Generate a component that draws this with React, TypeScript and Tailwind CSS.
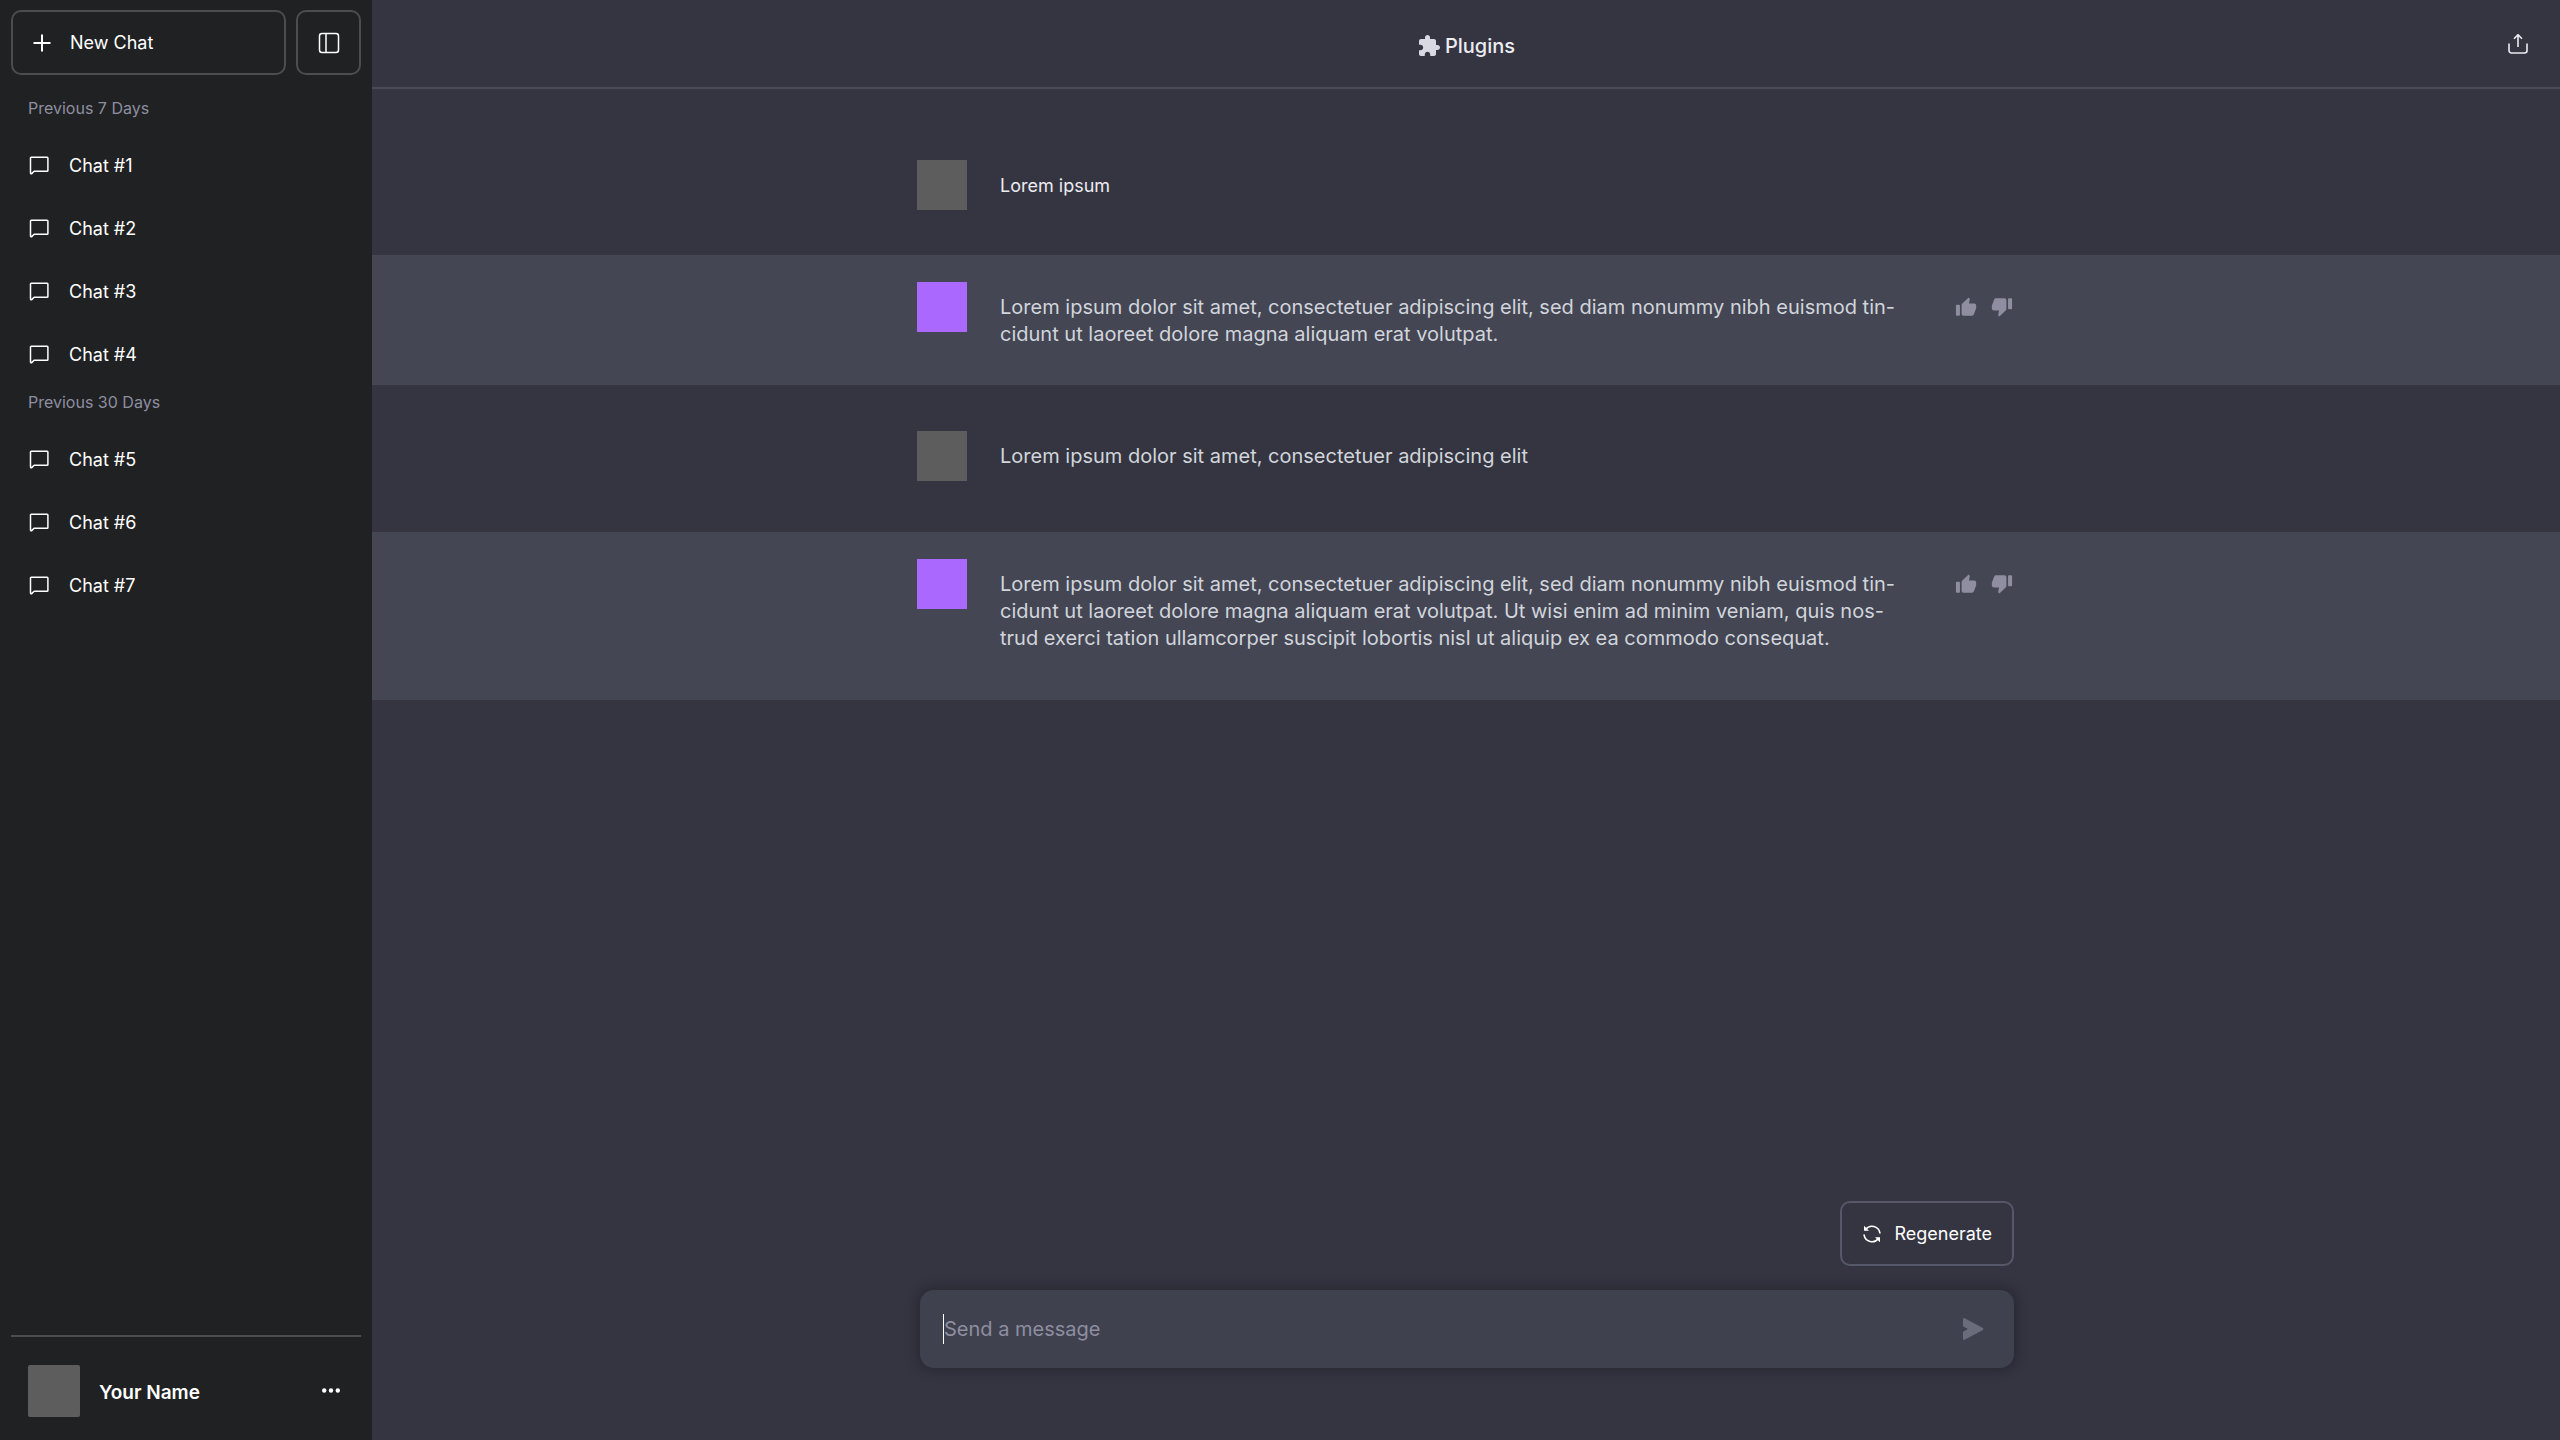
import type { ReactNode } from "react";

function PlusIcon() {
  return (
    <svg className="size-[18px]" viewBox="0 0 18 18" fill="none" stroke="currentColor" strokeWidth="2" aria-hidden="true">
      <path d="M9 .5v17M.5 9h17" />
    </svg>
  );
}

function PanelIcon() {
  return (
    <svg className="size-[22px]" viewBox="0 0 22 22" fill="none" stroke="currentColor" strokeWidth="1.5" aria-hidden="true">
      <rect x="1.5" y="1.5" width="19" height="19" rx="2.5" />
      <path d="M8 1.5v19" />
    </svg>
  );
}

function ChatIcon() {
  return (
    <svg className="size-5 shrink-0" viewBox="0 0 20 20" fill="none" stroke="currentColor" strokeWidth="1.5" strokeLinejoin="round" aria-hidden="true">
      <path d="M2.200 1.300h15.900a.8.8 0 0 1 .8.8v12.400a.8.8 0 0 1-.8.8H5.100l-2.400 2.300c-.5.500-1.200.1-1.200-.5V2c0-.4.300-.7.700-.7z" />
    </svg>
  );
}

function DotsIcon() {
  return (
    <svg className="h-5 w-[18px]" viewBox="0 0 18 20" fill="currentColor" aria-hidden="true">
      <circle cx="2.2" cy="9.5" r="2.2" />
      <circle cx="9" cy="9.5" r="2.2" />
      <circle cx="15.8" cy="9.5" r="2.2" />
    </svg>
  );
}

function PuzzleIcon() {
  return (
    <svg className="size-6" viewBox="0 0 24 24" fill="currentColor" aria-hidden="true">
      <path d="M20.5 11H19V7c0-1.1-.9-2-2-2h-4V3.5C13 2.12 11.88 1 10.5 1S8 2.12 8 3.5V5H4c-1.1 0-1.99.9-1.99 2v3.8H3.5c1.49 0 2.7 1.21 2.7 2.7s-1.21 2.7-2.7 2.7H2V20c0 1.1.9 2 2 2h3.8v-1.5c0-1.49 1.21-2.7 2.7-2.7s2.7 1.21 2.7 2.7V22H17c1.1 0 2-.9 2-2v-4h1.5c1.38 0 2.5-1.12 2.5-2.5S21.88 11 20.5 11z" />
    </svg>
  );
}

function ExportIcon() {
  return (
    <svg className="size-5" viewBox="0 0 20 20" fill="none" stroke="currentColor" strokeWidth="1.6" aria-hidden="true">
      <path d="M1 9.5v7A2.5 2.5 0 0 0 3.5 19h13a2.5 2.5 0 0 0 2.500-2.500v-7" />
      <path d="M10 13V1M6 4.700l4-4 4 4" />
    </svg>
  );
}

function ThumbIcon({ down = false }: { down?: boolean }) {
  return (
    <svg className={down ? "size-[22px] rotate-180" : "size-[22px]"} viewBox="0 0 24 24" fill="currentColor" aria-hidden="true">
      <rect x="1" y="9.6" width="4.4" height="11.9" rx="1" />
      <path d="M14.6 1.9 8 8.3c-.5.5-.8 1.1-.8 1.8v9.3c0 1.2.9 2.1 2.1 2.1h9.2c.9 0 1.6-.5 2-1.3l2.4-6.2c.1-.3.2-.6.2-.9v-2.5c0-1.3-1-2.3-2.2-2.3h-5.7l.9-4.4c.1-.5 0-1-.3-1.4-.3-.6-.8-.9-1.2-.6z" />
    </svg>
  );
}

function RefreshIcon() {
  return (
    <svg className="size-5" viewBox="0 0 20 20" aria-hidden="true">
      <g fill="none" stroke="currentColor" strokeWidth="1.6" strokeLinecap="round">
        <path d="M3.6 5.6a8 8 0 0 1 14.300 3.300" />
        <path d="M16.4 14.4A8 8 0 0 1 2.1 11.1" />
      </g>
      <path d="M2 1.8l5 5H2zM18 18.2l-5-5h5z" fill="currentColor" />
    </svg>
  );
}

function SendIcon() {
  return (
    <svg className="size-6" viewBox="0 0 24 24" fill="currentColor" aria-hidden="true">
      <path d="M2 2.2c0-.9.9-1.4 1.7-1l18.2 9.9c.7.4.7 1.4 0 1.8L3.7 22.800c-.8.400-1.700-.1-1.700-1v-6.600c0-.4.200-.7.500-.8l3.600-1.800c.5-.3.500-.9 0-1.200L2.500 9.600c-.3-.1-.5-.4-.5-.8z" />
    </svg>
  );
}

function ChatGroup({ title, chats }: { title: string; chats: string[] }) {
  return (
    <section>
      <h2 className="px-7 py-1 text-[16px] leading-6 text-[#8e8ea0]">{title}</h2>
      <ul className="pt-[10px]">
        {chats.map((chat) => (
          <li key={chat}>
            <a href="#" className="flex h-[63px] items-center gap-5 px-[29px] text-[18px] text-white">
              <ChatIcon />
              {chat}
            </a>
          </li>
        ))}
      </ul>
    </section>
  );
}

function Sidebar() {
  return (
    <aside className="flex w-[372px] shrink-0 flex-col bg-[#202123] text-white">
      <div className="flex gap-[10px] px-[11px] pt-[10px] pb-[17px]">
        <button type="button" className="flex h-[65px] flex-1 items-center gap-[19px] rounded-[10px] border-2 border-[#4d4d4f] px-5 text-[18px]">
          <PlusIcon />
          New Chat
        </button>
        <button type="button" aria-label="Toggle sidebar" className="flex size-[65px] items-center justify-center rounded-[10px] border-2 border-[#4d4d4f]">
          <PanelIcon />
        </button>
      </div>
      <nav className="flex flex-1 flex-col" aria-label="Chats">
        <ChatGroup title="Previous 7 Days" chats={["Chat #1", "Chat #2", "Chat #3", "Chat #4"]} />
        <ChatGroup title="Previous 30 Days" chats={["Chat #5", "Chat #6", "Chat #7"]} />
      </nav>
      <footer className="mx-[11px] flex items-center border-t-2 border-[#4d4d4f] pt-7 pr-[21px] pb-[23px] pl-[17px]">
        <div className="size-[52px] rounded-xs bg-[#5d5d5d]" />
        <span className="ml-[19px] flex-1 pt-1 text-[19px] font-semibold">Your Name</span>
        <button type="button" aria-label="Account menu">
          <DotsIcon />
        </button>
      </footer>
    </aside>
  );
}

type MessageProps = {
  from: "user" | "assistant";
  spacing: string;
  small?: boolean;
  children: ReactNode;
};

function Message({ from, spacing, small = false, children }: MessageProps) {
  const assistant = from === "assistant";
  return (
    <article className={`${spacing} ${assistant ? "bg-[#444654]" : ""}`}>
      <div className="mx-auto flex max-w-[1098px] items-start">
        <div className={assistant ? "size-[50px] shrink-0 bg-[#ab68ff]" : "size-[50px] shrink-0 bg-[#5d5d5d]"} />
        <p className={small ? "ml-[33px] flex-1 pt-3 text-[18px] leading-[27px] text-[#ececf1]" : "ml-[33px] flex-1 pt-3 text-[20px] leading-[27px] text-[#d1d5db]"}>
          {children}
        </p>
        {assistant && (
          <div className="flex gap-[14px] pt-[14px] pr-[2px] text-[#8e8ea0]">
            <button type="button" aria-label="Good response">
              <ThumbIcon />
            </button>
            <button type="button" aria-label="Bad response">
              <ThumbIcon down />
            </button>
          </div>
        )}
      </div>
    </article>
  );
}

function Composer() {
  return (
    <div className="mx-auto mt-auto w-full max-w-[1098px] pr-px pb-[72px] pl-[3px]">
      <div className="flex justify-end">
        <button type="button" className="flex h-[65px] items-center gap-3 rounded-[10px] border-2 border-[#565869] px-5 text-[18px] text-white">
          <RefreshIcon />
          Regenerate
        </button>
      </div>
      <form className="mt-6 flex h-[78px] items-center rounded-[14px] bg-[#40414f] px-[23px] shadow-[0_0_12px_4px_rgba(0,0,0,0.22)]">
        <span className="h-[30px] w-px bg-white" />
        <input type="text" aria-label="Message" placeholder="Send a message" className="min-w-0 flex-1 bg-transparent text-[20px] text-white outline-none placeholder:text-[#8e8ea0]" />
        <button type="submit" aria-label="Send message" className="px-[6px] text-[#6b6c7b]">
          <SendIcon />
        </button>
      </form>
    </div>
  );
}

export default function App() {
  return (
    <div className="flex min-h-screen bg-[#343541] font-['Inter','Liberation_Sans',sans-serif]">
      <Sidebar />
      <main className="flex min-w-0 flex-1 flex-col">
        <header className="grid h-[89px] grid-cols-[1fr_auto_1fr] items-center border-b-2 border-[#4a4b55] px-8 text-[#ececf1]">
          <h1 className="col-start-2 flex items-center gap-1 pt-1 text-[20px] font-medium">
            <span className="text-[#d9d9e3]">
              <PuzzleIcon />
            </span>
            Plugins
          </h1>
          <button type="button" aria-label="Share chat" className="justify-self-end">
            <ExportIcon />
          </button>
        </header>
        <Message from="user" spacing="pt-[71px] pb-[45px]" small>
          Lorem ipsum
        </Message>
        <Message from="assistant" spacing="pt-[27px] pb-[37px]">
          Lorem ipsum dolor sit amet, consectetuer adipiscing elit, sed diam nonummy nibh euismod tin-
          <br />
          cidunt ut laoreet dolore magna aliquam erat volutpat.
        </Message>
        <Message from="user" spacing="pt-[46px] pb-[51px]">
          Lorem ipsum dolor sit amet, consectetuer adipiscing elit
        </Message>
        <Message from="assistant" spacing="pt-[27px] pb-12">
          Lorem ipsum dolor sit amet, consectetuer adipiscing elit, sed diam nonummy nibh euismod tin-
          <br />
          cidunt ut laoreet dolore magna aliquam erat volutpat. Ut wisi enim ad minim veniam, quis nos-
          <br />
          trud exerci tation ullamcorper suscipit lobortis nisl ut aliquip ex ea commodo consequat.
        </Message>
        <Composer />
      </main>
    </div>
  );
}
